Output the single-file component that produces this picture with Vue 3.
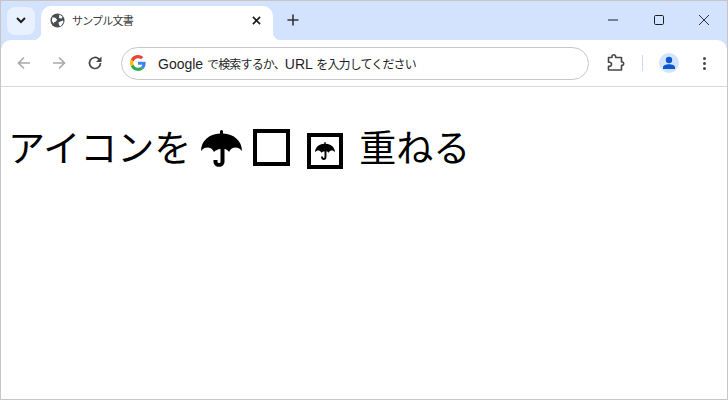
<script setup>
const title = 'サンプル文書'
const umbrella = 'M19 3.500V1.500a1.500 1.500 0 0 1 3 0v2C33 4 41 11 41 21c-2-2.500-4-3.500-6.500-3.500-2.700 0-5 1.300-6.500 4.500-1.200-1.800-2.700-2.700-4.500-3v12.500c0 3.300-2.300 5.300-5.500 5.300s-5.500-2-5.500-5.300V30h4v1.500c0 1 .6 1.600 1.500 1.600s1.500-.6 1.500-1.600V19c-2.500.3-5 1.200-6.500 3-1.500-3.200-3.800-4.500-6.500-4.500-2.500 0-4.500 1-6.500 3.500C0 11 8 4 19 3.500z'
</script>

<template>
  <div class="win">
    <div class="tabbar">
      <button class="tab-search">
        <svg width="10" height="7" viewBox="0 0 10 7"><path d="M1 1l4 4 4-4" fill="none" stroke="#1f1f1f" stroke-width="2"/></svg>
      </button>
      <div class="tab">
        <svg class="globe" width="15" height="15" viewBox="0 0 16 16">
          <circle cx="8" cy="8" r="7.500" fill="#4a4d51"/>
          <path d="M2.500 4.500l3 .5 2 2-1 2-2 .5-.2 2-2.300-3zM10 1.500l3.500 2.500-1.500 2-2.500-1zM9 10l4.500-2 1 1.500L11.500 14l-1.500-.5z" fill="#fff"/>
        </svg>
        <span class="tab-title">{{ title }}</span>
        <svg class="tab-close" width="9" height="9" viewBox="0 0 10 10"><path d="M1 1l8 8M9 1l-8 8" stroke="#1f1f1f" stroke-width="1.800"/></svg>
      </div>
      <svg class="new-tab" width="12" height="12" viewBox="0 0 12 12"><path d="M6 0.500v11M0.500 6h11" stroke="#333" stroke-width="1.600"/></svg>
      <div class="win-controls">
        <svg width="10" height="10" viewBox="0 0 10 10"><path d="M0 5h10" stroke="#1f1f1f"/></svg>
        <svg width="10" height="10" viewBox="0 0 10 10"><rect x=".5" y=".5" width="9" height="9" rx="1.200" fill="none" stroke="#1f1f1f"/></svg>
        <svg width="10" height="10" viewBox="0 0 10 10"><path d="M0 0l10 10M10 0L0 10" stroke="#1f1f1f" stroke-width=".9"/></svg>
      </div>
    </div>

    <div class="toolbar">
      <svg class="nav" width="16" height="16" viewBox="0 0 16 16"><path d="M14 8H2.500M8 2.500L2.500 8 8 13.500" fill="none" stroke="#a8abad" stroke-width="1.600"/></svg>
      <svg class="nav" width="16" height="16" viewBox="0 0 16 16"><path d="M2 8h11.500M8 2.500L13.500 8 8 13.500" fill="none" stroke="#a8abad" stroke-width="1.600"/></svg>
      <svg class="nav" width="16" height="16" viewBox="0 0 16 16"><path d="M13.500 8a5.500 5.500 0 1 1-1.600-3.900L13.500 6" fill="none" stroke="#474747" stroke-width="1.700"/><path d="M14.500 1.500v5.500H9z" fill="#474747"/></svg>
      <div class="omnibox">
        <svg width="16" height="16" viewBox="0 0 48 48">
          <path fill="#EA4335" d="M24 9.500c3.500 0 6.700 1.200 9.200 3.600l6.900-6.900C35.900 2.400 30.500 0 24 0 14.600 0 6.500 5.400 2.600 13.200l8 6.200C12.500 13.600 17.800 9.500 24 9.500z"/>
          <path fill="#4285F4" d="M47 24.500c0-1.600-.1-3.100-.4-4.500H24v9h12.900c-.6 3-2.200 5.500-4.700 7.200l7.700 6C44.400 38 47 31.800 47 24.500z"/>
          <path fill="#FBBC05" d="M10.500 28.600c-.5-1.400-.8-3-.8-4.600s.3-3.200.8-4.600l-8-6.200C.9 16.500 0 20.100 0 24s.9 7.500 2.600 10.800l7.900-6.200z"/>
          <path fill="#34A853" d="M24 48c6.500 0 11.900-2.100 15.900-5.800l-7.700-6c-2.100 1.400-4.900 2.300-8.200 2.300-6.200 0-11.500-4.100-13.400-9.900l-8 6.200C6.500 42.600 14.600 48 24 48z"/>
        </svg>
        <span class="omni-text">Google <span class="cjk">で検索するか、</span>URL <span class="cjk">を入力してください</span></span>
      </div>
      <svg class="ext" width="20" height="20" viewBox="0 0 20 20"><path d="M7 3.500a1.800 1.800 0 0 1 3.600 0V4.500H16.500V9h1a1.800 1.800 0 0 1 0 3.400h-1V17H3.500V13.200h1a2 2 0 0 0 0-4h-1V4.500H7z" fill="none" stroke="#474747" stroke-width="1.600" stroke-linejoin="round"/></svg>
      <span class="sep"></span>
      <div class="avatar">
        <svg width="14" height="14" viewBox="0 0 14 14"><circle cx="7" cy="4" r="3.200" fill="#0b57d0"/><path d="M1 13v-1.500C1 9.500 4 8.300 7 8.300s6 1.200 6 3.200V13z" fill="#0b57d0"/></svg>
      </div>
      <div class="dots"><i></i><i></i><i></i></div>
    </div>

    <div class="page">
      <span>アイコンを</span>
      <svg class="umbrella" width="41" height="37" viewBox="0 0 41 37"><path :d="umbrella" fill="#000"/></svg>
      <span class="box"></span>
      <span class="box-small">
        <svg width="20" height="18" viewBox="0 0 41 37"><path :d="umbrella" fill="#000"/></svg>
      </span>
      <span class="last">重ねる</span>
    </div>
  </div>
</template>

<style>
html, body { margin: 0; background: #fff; }
</style>

<style scoped>
.win {
  width: 728px;
  height: 400px;
  box-sizing: border-box;
  border: 1px solid #c6c6c6;
  display: flex;
  flex-direction: column;
  overflow: hidden;
  background: #d3e3fd;
  font-family: "Noto Sans CJK JP", "Liberation Sans", sans-serif;
}
.tabbar {
  height: 39px;
  background: #d3e3fd;
  display: flex;
  align-items: flex-end;
  flex: none;
}
.tab-search {
  width: 28px;
  height: 28px;
  margin: 0 0 5px 6px;
  padding: 0 0 2px;
  border: 0;
  border-radius: 8px;
  background: #e9f0fe;
  display: flex;
  align-items: center;
  justify-content: center;
}
.tab {
  position: relative;
  width: 232px;
  height: 34px;
  margin-left: 6px;
  background: #fff;
  border-radius: 10px 10px 0 0;
  display: flex;
  align-items: center;
  box-sizing: border-box;
  padding: 0 12px 6px 9px;
}
/* concave feet of the active tab */
.tab::before,
.tab::after {
  content: "";
  position: absolute;
  bottom: 0;
  width: 8px;
  height: 8px;
}
.tab::before {
  left: -8px;
  background: radial-gradient(circle at 0 0, #d3e3fd 8px, #fff 8.500px);
}
.tab::after {
  right: -8px;
  background: radial-gradient(circle at 100% 0, #d3e3fd 8px, #fff 8.500px);
}
.globe { flex: none; }
.tab-title {
  margin-left: 7px;
  font-size: 11px;
  letter-spacing: -0.8px;
  color: #3c3c3c;
  flex: 1;
}
.new-tab { margin: 0 0 14px 14px; }
.win-controls {
  margin-left: auto;
  display: flex;
  gap: 35.500px;
  padding: 0 18px 15px 0;
  align-items: center;
}
.toolbar {
  height: 47px;
  box-sizing: border-box;
  border-bottom: 1px solid #d9d9d9;
  background: #fff;
  border-radius: 10px 10px 0 0;
  display: flex;
  align-items: center;
  padding-left: 15px;
  flex: none;
}
.nav { margin-right: 19px; flex: none; }
.nav:nth-child(2) { margin-right: 20px; }
.nav:nth-child(3) { margin-right: 18px; }
.omnibox {
  width: 468px;
  height: 33px;
  box-sizing: border-box;
  border: 1px solid #c7c7c7;
  border-radius: 17px;
  display: flex;
  align-items: center;
  padding-left: 8px;
  flex: none;
}
.omni-text {
  margin-left: 12px;
  font-size: 14px;
  color: #1f1f1f;
  white-space: nowrap;
  font-family: "Liberation Sans", "Noto Sans CJK JP", sans-serif;
}
.cjk { font-size: 12px; letter-spacing: -0.85px; }
.ext { margin-left: 16px; flex: none; }
.sep {
  width: 1px;
  height: 16px;
  background: #c6dafc;
  margin-left: 17px;
}
.avatar {
  width: 20px;
  height: 20px;
  border-radius: 50%;
  background: #d3e3fd;
  margin-left: 16px;
  display: flex;
  align-items: center;
  justify-content: center;
}
.dots {
  margin-left: 24px;
  display: flex;
  flex-direction: column;
  gap: 2px;
}
.dots i {
  width: 3px;
  height: 3px;
  border-radius: 50%;
  background: #474747;
}
.page {
  flex: 1;
  background: #fff;
  padding: 33px 0 0 7px;
  display: flex;
  align-items: flex-start;
  font-size: 37px;
  line-height: 53px;
  color: #000;
}
.umbrella { margin: 10px 0 0 10px; flex: none; }
.box {
  width: 29px;
  height: 29px;
  border: 4px solid #000;
  margin: 9px 0 0 11px;
  flex: none;
}
.box-small {
  width: 28px;
  height: 28px;
  box-sizing: content-box;
  border: 4px solid #000;
  margin: 13px 0 0 17px;
  flex: none;
  display: flex;
  align-items: center;
  justify-content: center;
}
.last { margin-left: 16px; }
</style>
